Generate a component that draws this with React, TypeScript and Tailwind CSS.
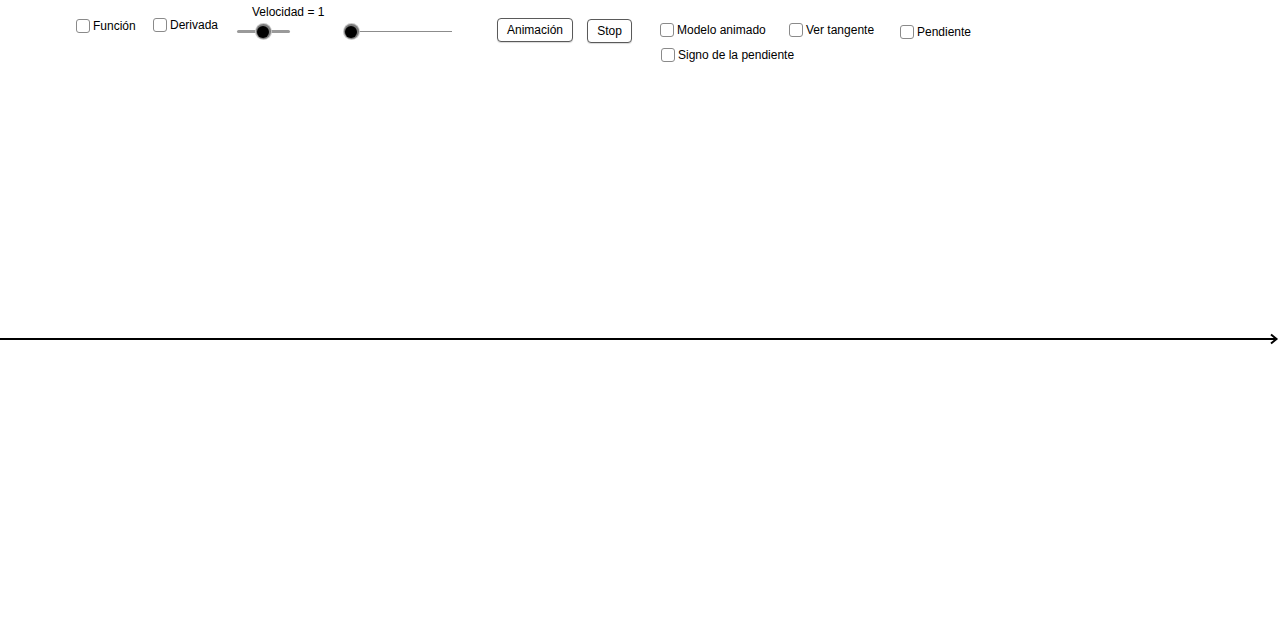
const font = { fontFamily: '"Liberation Sans", Arial, sans-serif' };

function Check({ x, y, label }: { x: number; y: number; label: string }) {
  return (
    <label
      className="absolute flex items-center gap-[3px] text-[12px] leading-none text-black"
      style={{ left: x, top: y }}
    >
      <span className="block w-[14px] h-[14px] rounded-[3px] border-[1.5px] border-[#8a8a8a] bg-white" />
      <span>{label}</span>
    </label>
  );
}

function Knob({ x, y }: { x: number; y: number }) {
  return (
    <span
      className="absolute w-[17px] h-[17px] rounded-full bg-[#c8c8c8] flex items-center justify-center"
      style={{ left: x - 8.5, top: y - 8.5 }}
    >
      <span className="w-[15px] h-[15px] rounded-full bg-[#7a7a7a] flex items-center justify-center">
        <span className="w-[12px] h-[12px] rounded-full bg-black" />
      </span>
    </span>
  );
}

function Btn({ x, y, w, label }: { x: number; y: number; w: number; label: string }) {
  return (
    <button
      className="absolute h-[24px] rounded-[4px] border border-[#5a5a5a] bg-white text-[12px] leading-none text-black flex items-center justify-center shadow-[0_1px_1px_rgba(0,0,0,0.15)]"
      style={{ left: x, top: y, width: w }}
    >
      {label}
    </button>
  );
}

export default function App() {
  return (
    <div className="relative w-[1280px] h-[630px] bg-white overflow-hidden" style={font}>
      {/* checkboxes */}
      <Check x={76} y={19} label="Función" />
      <Check x={153} y={18} label="Derivada" />

      {/* speed slider */}
      <div className="absolute left-[252px] top-[6px] text-[12px] leading-none text-black">Velocidad = 1</div>
      <div className="absolute left-[237px] top-[30px] w-[53px] h-[3px] bg-[#9a9a9a] rounded-full" />
      <Knob x={263} y={31.5} />

      {/* position slider */}
      <div className="absolute left-[351px] top-[31px] w-[101px] h-[1px] bg-[#8c8c8c]" />
      <Knob x={351} y={31.5} />

      {/* buttons */}
      <Btn x={497} y={18} w={76} label="Animación" />
      <Btn x={587} y={19} w={45} label="Stop" />

      <Check x={660} y={23} label="Modelo animado" />
      <Check x={789} y={23} label="Ver tangente" />
      <Check x={900} y={25} label="Pendiente" />
      <Check x={661} y={48} label="Signo de la pendiente" />

      {/* x axis */}
      <div className="absolute left-0 top-[338px] w-[1275px] h-[2px] bg-black" />
      <svg className="absolute left-[1268px] top-[333px]" width="12" height="12" viewBox="0 0 12 12">
        <path d="M3 1.5 L8.5 6 L3 10.5" fill="none" stroke="black" strokeWidth="2" />
      </svg>
    </div>
  );
}
